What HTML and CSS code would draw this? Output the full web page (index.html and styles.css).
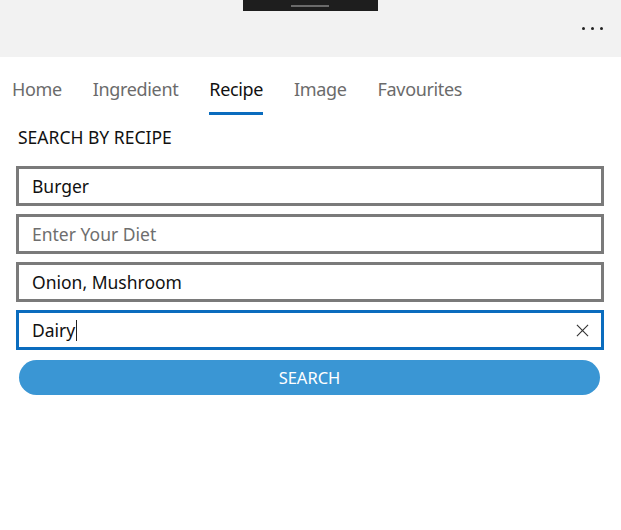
FILE: index.html
```html
<!DOCTYPE html>
<html>
<head>
<meta charset="utf-8">
<link rel="stylesheet" href="styles.css">
</head>
<body>
<div class="titlebar">
  <div class="grip"><span class="grip-line"></span></div>
  <div class="more"><span></span><span></span><span></span></div>
</div>
<nav class="tabs">
  <div class="tab">Home</div>
  <div class="tab">Ingredient</div>
  <div class="tab active">Recipe</div>
  <div class="tab">Image</div>
  <div class="tab">Favourites</div>
</nav>
<main class="content">
  <h1 class="heading">SEARCH BY RECIPE</h1>
  <div class="field"><span class="value">Burger</span></div>
  <div class="field"><span class="placeholder">Enter Your Diet</span></div>
  <div class="field"><span class="value">Onion, Mushroom</span></div>
  <div class="field focused"><span class="value">Dairy</span><span class="caret"></span>
    <svg class="clear" width="14" height="14" viewBox="0 0 14 14"><path d="M1 1L13 13M13 1L1 13" stroke="#333" stroke-width="1.2" fill="none"/></svg>
  </div>
  <button class="search">SEARCH</button>
</main>
</body>
</html>
```
FILE: styles.css
```css
html, body {
  margin: 0;
  padding: 0;
  background: #ffffff;
  font-family: "Noto Sans", "Open Sans", sans-serif;
}
.titlebar {
  position: relative;
  height: 57px;
  background: #f2f2f2;
  display: flex;
  justify-content: center;
}
.grip {
  width: 135px;
  height: 11px;
  margin-left: -1px;
  background: #1e1e1e;
  display: flex;
  justify-content: center;
  align-items: center;
}
.grip-line {
  width: 38px;
  height: 2px;
  background: #6a6a6a;
}
.more {
  position: absolute;
  right: 18px;
  top: 27px;
  display: flex;
  gap: 6px;
}
.more span {
  width: 3px;
  height: 3px;
  background: #222;
  border-radius: 50%;
}
.tabs {
  display: flex;
  gap: 31px;
  padding: 20px 0 0 12px;
  height: 38px;
}
.tab {
  font-size: 18px;
  letter-spacing: -0.35px;
  color: #6b6b6b;
  line-height: 25px;
  height: 38px;
  box-sizing: border-box;
}
.tab.active {
  color: #111;
  border-bottom: 3px solid #0a6cbe;
}
.content {
  padding: 11px 16px 0 16px;
  width: 588px;
}
.heading {
  margin: 0 0 18px 2px;
  font-size: 17.5px;
  font-weight: normal;
  color: #111;
  line-height: 22px;
}
.field {
  box-sizing: border-box;
  height: 40px;
  border: 3px solid #7a7a7a;
  margin-bottom: 8px;
  display: flex;
  align-items: center;
  padding: 0 13px;
  font-size: 17.5px;
  color: #111;
  position: relative;
}
.field.focused {
  border-color: #0a6cbe;
  margin-bottom: 10px;
}
.placeholder {
  color: #6e6e6e;
}
.caret {
  width: 1px;
  height: 21px;
  background: #222;
  margin-left: 1px;
}
.clear {
  margin-left: auto;
  margin-right: -1px;
  width: 13px;
  height: 13px;
}
.search {
  display: block;
  margin-left: 3px;
  width: 581px;
  height: 35px;
  border: none;
  border-radius: 18px;
  background: #3a96d4;
  color: #ffffff;
  font-family: "Noto Sans", "Open Sans", sans-serif;
  font-size: 16.5px;
  padding: 0;
}
```
